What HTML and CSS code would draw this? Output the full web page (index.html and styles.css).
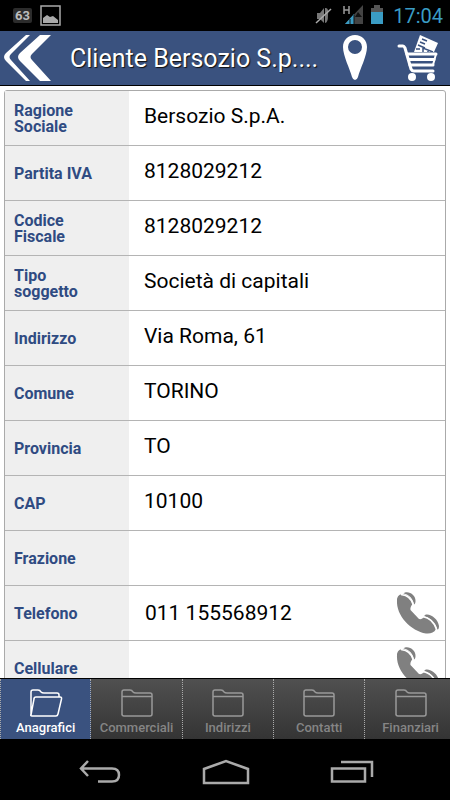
FILE: index.html
```html
<!DOCTYPE html>
<html lang="it">
<head>
<meta charset="utf-8">
<meta name="viewport" content="width=device-width, initial-scale=1">
<title>Cliente Bersozio S.p.A.</title>
<link rel="stylesheet" href="styles.css">
</head>
<body>
<svg class="defs" aria-hidden="true">
  <symbol id="phone" viewBox="0 0 44 44">
    <path d="M1 9C1 5 4 3 7 3C12 4 16 8 16.500 13C15 15 14 17 14.500 19L23 28C25 28.500 27 27.500 28 26C34 27 39 32 40 38C38 42 34 43 30 42.500C15 40 0 25 1 9Z"/>
    <path d="M9 1.500C14 0 20 5 19.500 10C19.500 12 19 13 18 13.500C17.500 8 13 3.500 7.500 2.200Z"/>
    <path d="M29 24C34 22 42 28 43 35C43 37 42.500 38 41.500 39C40 32 35 27 28 25.200Z"/>
    <path class="phone-gap" d="M5 3.500Q15 4.500 17.500 14.500M26.500 25.500Q37 27 41 39.500"/>
  </symbol>
  <symbol id="folder" viewBox="0 0 34 30">
    <path d="M2 27V4Q2 2 4 2H10Q12 2 13 4Q14 5 16 5H30Q32 5 32 7V26Q32 28 30 28H4Q2 28 2 26ZM2 8.500H32"/>
  </symbol>
  <symbol id="folder-open" viewBox="0 0 34 30">
    <path d="M2 27V4Q2 2 4 2H9Q11 2 12 4Q13 5 15 5H28Q30 5 30 7V9M2 27L5 11Q5 9 7 9H31Q33 9 32.500 11L29 26Q28.500 28 27 28H3Q1 28 2 26"/>
  </symbol>
</svg>
<div class="app">
  <div class="status">
    <span class="count">63</span>
    <svg class="picture" width="21" height="21" viewBox="0 0 21 21"><path d="M1 1H20V20H1Z" fill="none" stroke="#aaa" stroke-width="1.500"/><path d="M3 18V13L7 10L10 12L13 11L18 15V18Z" fill="#aaa"/></svg>
    <span class="spacer"></span>
    <svg width="70" height="24" viewBox="0 0 70 24">
      <path d="M2 9H5L9 4V19L5 15H2ZM10 4Q14 3 13 11Q13 19 10 19Z" fill="#777"/><path d="M1 19L16 5" stroke="#aaa" stroke-width="1.500"/>
      <path d="M29 2V10M34 2V10M29 6H34" stroke="#999" stroke-width="1.500" fill="none"/>
      <path d="M48 1V20H30Z" fill="#444"/><path d="M39 10V20H30Z" fill="#3a9cc4"/><path d="M35 15V20M39 11V20" stroke="#111"/><path d="M43 8L47 13H40Z" fill="#111"/>
      <path d="M56 4H59V1H65V4H68V8H56Z" fill="#555"/><path d="M56 8H68V20H56Z" fill="#3a9cc4"/>
    </svg>
    <time class="clock">17:04</time>
  </div>
  <header class="header">
    <button class="icon-button" aria-label="Indietro"><svg width="50" height="48" viewBox="0 0 50 48"><path d="M23 1H27L8 20Q5 23 8 26L27 47H23L3 27Q-1 23 3 19ZM37 1H48L29 20Q26 23 29 26L48 47H37L17 27Q13 23 17 19Z" fill="#fff"/></svg></button>
    <h1 class="title">Cliente Bersozio S.p....</h1>
    <button class="icon-button pin" aria-label="Mappa"><svg width="26" height="48" viewBox="0 0 26 48"><path fill="#fff" fill-rule="evenodd" d="M13 1C20 1 25 6 25 13C25 22 18 35 16 43Q15 46 13 46Q11 46 10 43C8 35 1 22 1 13C1 6 6 1 13 1ZM13 6A7 7 0 1 0 13 20A7 7 0 1 0 13 6Z"/></svg></button>
    <button class="icon-button" aria-label="Carrello"><svg width="42" height="48" viewBox="0 0 42 48">
      <path d="M23 1L41 9L37 18H17Z" fill="#fff"/><path d="M25 5L30 7M23 8L28 10M21 11L28 14M19 15H23M26 18V14L36 18M31 16V18" stroke="#3a527f" stroke-width="1.500" fill="none"/>
      <path d="M2 12H6Q7 12 8 14L14 35Q15 37 17 37H36" fill="none" stroke="#fff" stroke-width="3" stroke-linecap="round" stroke-linejoin="round"/>
      <path d="M10 20H39M12 25.500H37M13 31H36" stroke="#fff" stroke-width="3" stroke-linecap="round"/><path d="M39 20L36 31" stroke="#fff" stroke-width="2"/>
      <circle cx="15" cy="43" r="4" fill="#fff"/><circle cx="34" cy="43" r="4" fill="#fff"/>
    </svg></button>
  </header>
  <main class="content">
    <table class="details">
      <tbody>
      <tr><th scope="row">Ragione Sociale</th><td>Bersozio S.p.A.</td></tr>
      <tr><th scope="row">Partita IVA</th><td>8128029212</td></tr>
      <tr><th scope="row">Codice Fiscale</th><td>8128029212</td></tr>
      <tr><th scope="row">Tipo soggetto</th><td>Società di capitali</td></tr>
      <tr><th scope="row">Indirizzo</th><td>Via Roma, 61</td></tr>
      <tr><th scope="row">Comune</th><td>TORINO</td></tr>
      <tr><th scope="row">Provincia</th><td>TO</td></tr>
      <tr><th scope="row">CAP</th><td>10100</td></tr>
      <tr><th scope="row">Frazione</th><td></td></tr>
      <tr><th scope="row">Telefono</th><td class="phone-cell"><div class="phone-row"><span>011 155568912</span><button class="call" aria-label="Chiama telefono"><svg width="44" height="44"><use href="#phone"/></svg></button></div></td></tr>
      <tr><th scope="row">Cellulare</th><td class="phone-cell"><div class="phone-row"><span></span><button class="call" aria-label="Chiama cellulare"><svg width="44" height="44"><use href="#phone"/></svg></button></div></td></tr>
      </tbody>
    </table>
  </main>
  <nav class="tabs">
    <button class="tab active"><svg width="34" height="30"><use href="#folder-open"/></svg>Anagrafici</button>
    <button class="tab"><svg width="34" height="30"><use href="#folder"/></svg>Commerciali</button>
    <button class="tab"><svg width="34" height="30"><use href="#folder"/></svg>Indirizzi</button>
    <button class="tab"><svg width="34" height="30"><use href="#folder"/></svg>Contatti</button>
    <button class="tab"><svg width="34" height="30"><use href="#folder"/></svg>Finanziari</button>
  </nav>
  <div class="system">
    <button aria-label="Indietro di sistema"><svg width="44" height="24" viewBox="0 0 44 24"><path d="M10 1L3 8.500L10 16M3 8.500H34Q41 8.500 41 15Q41 21.500 34 21.500H20"/></svg></button>
    <button aria-label="Home"><svg width="48" height="26" viewBox="0 0 48 26"><path d="M2 24V10L24 2L46 10V24Z"/></svg></button>
    <button aria-label="App recenti"><svg width="44" height="24" viewBox="0 0 44 24"><path d="M2 8.500H35V21.500H2ZM11 2H42V17"/></svg></button>
  </div>
</div>
</body>
</html>
```
FILE: styles.css
```css
* {
  box-sizing: border-box;
}

body {
  margin: 0;
  background: #000;
  font-family: Roboto, "Liberation Sans", sans-serif;
}

button {
  padding: 0;
  border: 0;
  background: none;
  color: inherit;
  font: inherit;
}

svg {
  display: block;
}

.defs {
  position: absolute;
  width: 0;
  height: 0;
}

.app {
  display: flex;
  flex-direction: column;
  height: 100vh;
}

.status {
  display: flex;
  flex: none;
  align-items: center;
  gap: 8px;
  height: 31px;
  padding: 0 7px 0 13px;
}

.count {
  padding: 0 2px;
  border-radius: 2px;
  background: #2c2c2c;
  color: #bbb;
  font-size: 13px;
  font-weight: 700;
  line-height: 15px;
}

.spacer {
  flex: 1;
}

.clock {
  color: #3a9cc4;
  font-size: 20px;
}

.header {
  display: flex;
  flex: none;
  align-items: center;
  height: 55px;
  padding: 0 11px 0 3px;
  border-bottom: 1px solid #000;
  background: #3a527f;
  color: #fff;
}

.title {
  flex: 1;
  min-width: 0;
  margin: 0 0 0 17px;
  overflow: hidden;
  font-size: 25px;
  font-weight: 400;
  white-space: nowrap;
  text-shadow: 1px 1px 1px #111;
}

.pin {
  margin: 0 29px 0 17px;
}

.content {
  flex: 1;
  min-height: 0;
  padding: 4px 4px 0;
  overflow: hidden;
  background: #fff;
}

.details {
  width: 100%;
  border: 1px solid #aaa;
  border-radius: 3px;
  border-spacing: 0;
  table-layout: fixed;
}

.details th,
.details td {
  height: 55px;
  border-bottom: 1px solid #b4b4b4;
}

.details th {
  width: 124px;
  padding: 4px 32px 3px 9px;
  background: #efefef;
  color: #2f4b82;
  font-size: 16px;
  font-weight: 700;
  line-height: 16px;
  text-align: left;
}

.details td {
  padding: 0 5px 4px 15px;
  color: #000;
  font-size: 21px;
  line-height: 26px;
}

.details .phone-cell {
  padding: 0 5px 0 16px;
}

.phone-row {
  display: flex;
  align-items: center;
  justify-content: space-between;
}

.call svg {
  fill: #808080;
}

.phone-gap {
  fill: none;
  stroke: #fff;
  stroke-width: 1.500;
}

.tabs {
  display: flex;
  flex: none;
  height: 61px;
  overflow: hidden;
  border-top: 1px solid #000;
  background: linear-gradient(#505050, #343434);
}

.tab {
  display: flex;
  flex: 0 0 20.3%;
  flex-direction: column;
  align-items: center;
  gap: 2px;
  padding-top: 9px;
  border-right: 1px dotted #aaa;
  color: #858585;
  font-size: 13px;
  font-weight: 500;
  line-height: 16px;
}

.tab svg {
  fill: none;
  stroke: #999;
  stroke-width: 1.500;
}

.active {
  border-left: 1px dotted #aaa;
  background: #3a527f;
  color: #fff;
}

.active svg {
  stroke: #fff;
}

.system {
  display: flex;
  flex: none;
  align-items: center;
  justify-content: space-between;
  height: 61px;
  padding: 4px 76px 0 78px;
}

.system svg {
  fill: none;
  stroke: #aaa;
  stroke-width: 2.500;
}
```
